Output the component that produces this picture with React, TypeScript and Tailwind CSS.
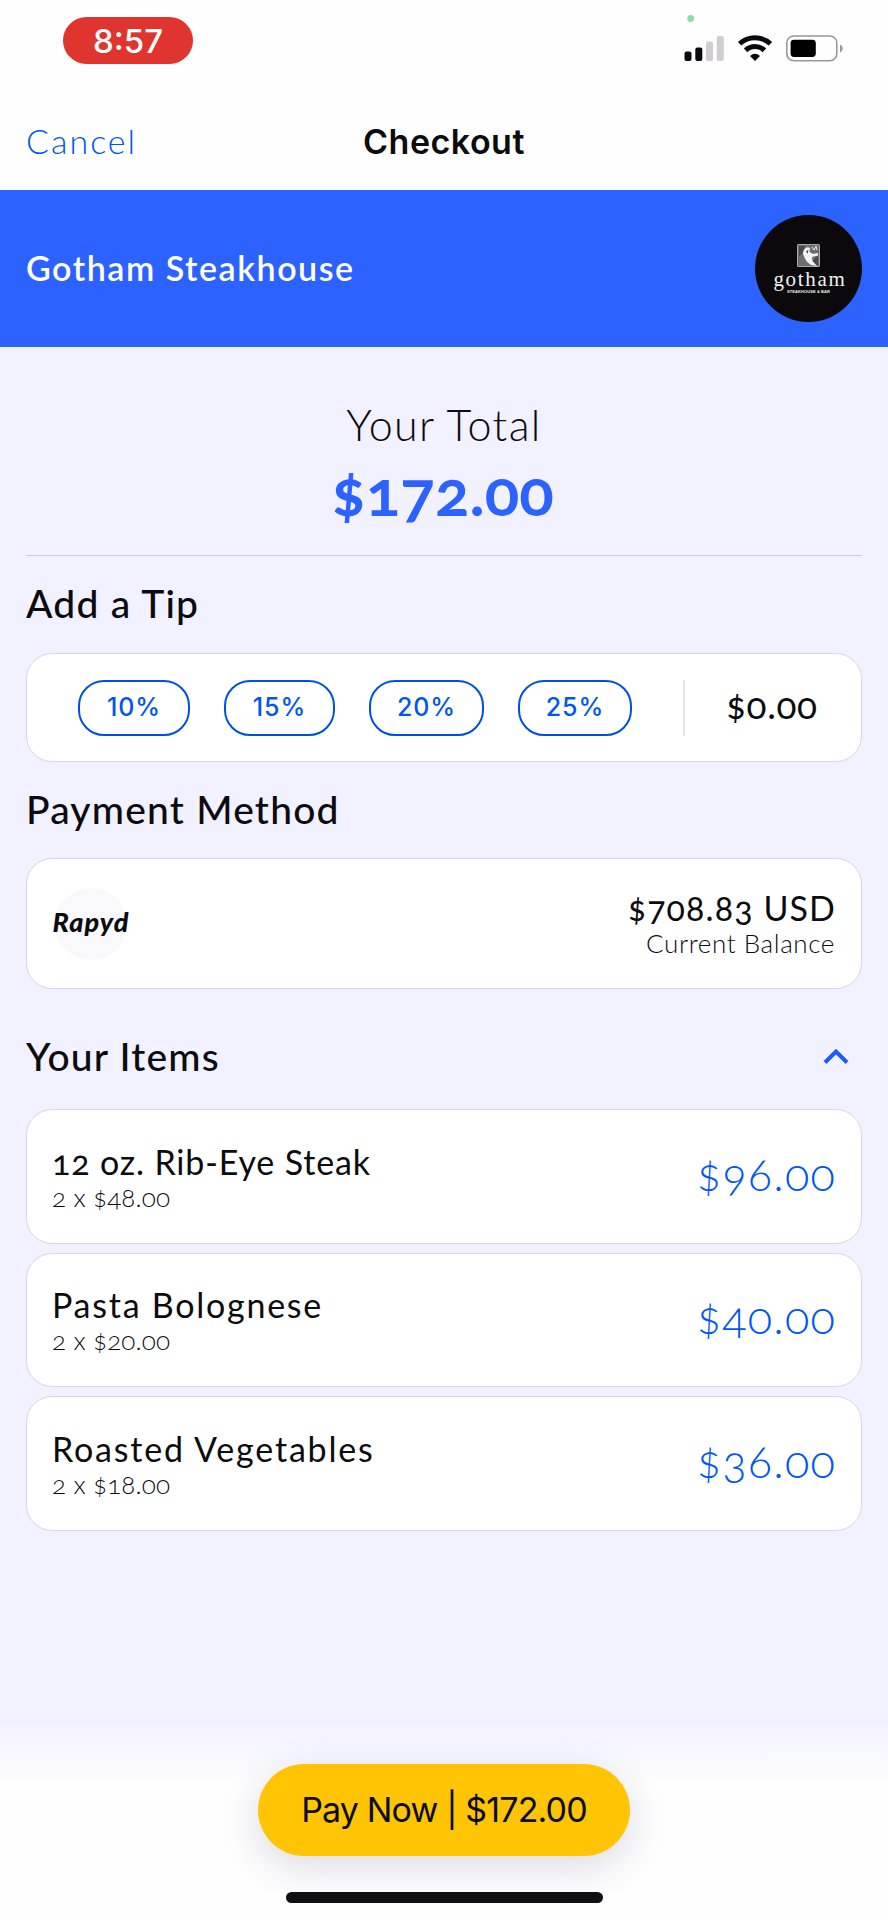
import React from 'react';

const tips = [
  { label: '10%', className: 'w-[112px]' },
  { label: '15%', className: 'w-[111px] ml-[34px]' },
  { label: '20%', className: 'w-[115px] ml-[34px]' },
  { label: '25%', className: 'w-[114px] ml-[34px]' },
];

const items = [
  { name: '12 oz. Rib-Eye Steak', detail: '2 x $48.00', price: '$96.00', nameClass: 'tracking-[0.85px]' },
  { name: 'Pasta Bolognese', detail: '2 x $20.00', price: '$40.00', nameClass: 'tracking-[1.75px]' },
  { name: 'Roasted Vegetables', detail: '2 x $18.00', price: '$36.00', nameClass: 'tracking-[1.8px]' },
];

function StatusBar() {
  return (
    <div className="flex h-[95px] items-start justify-between pl-[63px] pr-[45px]">
      <div className="mt-[17px] flex h-[47px] w-[130px] items-center justify-center rounded-[24px] bg-[#e0352f] pt-[2px] font-['Inter',sans-serif] text-[33px] font-medium leading-none text-white">
        8:57
      </div>
      <svg className="mt-[12px]" width="160" height="52" viewBox="0 0 160 52">
        <circle cx="7.7" cy="6.5" r="3.4" fill="#86e0a0" />
        <rect x="1.5" y="39.5" width="7" height="9.5" rx="2" fill="#0b0b0d" />
        <rect x="12.3" y="35.5" width="7" height="13.5" rx="2" fill="#0b0b0d" />
        <rect x="23" y="29.5" width="7" height="19.5" rx="2" fill="#cfcdd1" />
        <rect x="33.8" y="24" width="7" height="25" rx="2" fill="#cfcdd1" />
        <g fill="none" stroke="#0b0b0d" strokeWidth="5">
          <path d="M56.6 31.8 A22.5 22.5 0 0 1 87.4 31.8" />
          <path d="M62.6 38.4 A13.4 13.4 0 0 1 81.4 38.4" />
        </g>
        <path d="M67 44 Q72 39.4 77 44 L72 49 Z" fill="#0b0b0d" />
        <rect x="103.8" y="24" width="50" height="24.8" rx="7" fill="none" stroke="#99979c" strokeWidth="1.6" />
        <rect x="107.6" y="27.8" width="25.2" height="17.2" rx="3.4" fill="#000" />
        <path d="M157 32.6 Q159.8 34 159.8 36.4 Q159.8 38.8 157 40.4 Z" fill="#99979c" />
      </svg>
    </div>
  );
}

function GothamLogo() {
  return (
    <div className="flex size-[107px] flex-col items-center rounded-full bg-[#0b090b] pt-[29px] text-[#f1f1f1]">
      <svg width="23" height="23" viewBox="0 0 23 23">
        <rect width="23" height="23" rx="1.5" fill="#6d6d70" />
        <rect x="0.5" y="0.5" width="22" height="22" rx="1" fill="none" stroke="#a9a9ab" />
        <path d="M2 2h6L6 8l-4 5zM18 14l3-2v9h-8z" fill="#4a4a4d" />
        <path d="M7 6 Q9 2 13 4 L12.5 8 L16 10 L21 9 L21 11.5 L15 13 L15.5 17 L20 22 L14 21 Q8 17 7 12 Q5 9 7 6 Z" fill="#f3f3f3" />
        <path d="M9 7 L11.5 6 L10.5 10 Z" fill="#4b4b4e" />
        <path d="M15 3l2 3 2-4 1 4" fill="none" stroke="#eee" />
      </svg>
      <div className="-mt-px mr-[-3px] font-['Liberation_Serif',serif] text-[21px] leading-[26px] tracking-[1.7px]">
        gotham
      </div>
      <div className="-mt-[3px] font-['Liberation_Sans',sans-serif] text-[4px] font-bold leading-[5px] tracking-[0.1px]">
        STEAKHOUSE &amp; BAR
      </div>
    </div>
  );
}

function Heading({ children }: { children: React.ReactNode }) {
  return <h2 className="text-[39px] font-medium leading-[50px] tracking-[1.2px]">{children}</h2>;
}

export default function App() {
  return (
    <div className="flex h-[1920px] w-[888px] flex-col overflow-hidden bg-[#f2f1ff] font-['Lato',sans-serif] oldstyle-nums text-[#0c0c0f]">
      <header className="h-[189.5px] bg-[#fefefe]">
        <StatusBar />
        <div className="grid h-[94px] grid-cols-3 items-center px-[26px]">
          <button className="pb-[2px] text-left text-[34px] font-light leading-none tracking-[2px] text-[#0055f5]">Cancel</button>
          <h1 className="text-center font-['Inter',sans-serif] text-[34px] font-semibold leading-none tracking-[0.5px]">Checkout</h1>
        </div>
      </header>

      <section className="flex h-[157.5px] items-center justify-between bg-[#2c62ff] px-[26px]">
        <div className="pb-[2px] text-[34px] font-semibold tracking-[1.55px] text-white">Gotham Steakhouse</div>
        <GothamLogo />
      </section>

      <main className="px-[26px]">
        <div className="border-b border-[#cfcddb] pb-[26px] pt-[48px] text-center">
          <div className="text-[43px] font-light leading-[60px] tracking-[1.4px]">Your Total</div>
          <div className="mr-[3px] text-[64px] font-bold leading-[74px] text-[#2c62ff]">$172.00</div>
        </div>

        <div className="mt-[22px]">
          <Heading>Add a Tip</Heading>
        </div>
        <div className="mt-[25px] flex h-[109px] items-center rounded-[26px] border border-[#d8d6e2] bg-white pl-[51px]">
          {tips.map((tip) => (
            <button
              key={tip.label}
              className={`h-[56px] rounded-[26px] border-2 border-[#0050e8] font-['Inter',sans-serif] text-[25px] font-medium tracking-[0.9px] text-[#0055f5] ${tip.className}`}
            >
              {tip.label}
            </button>
          ))}
          <div className="ml-[51px] h-[56px] w-[2px] bg-[#e6e5ea]" />
          <div className="ml-[41px] pb-[5px] text-[37px] tracking-[0.6px]">$0.00</div>
        </div>

        <div className="mt-[22px]">
          <Heading>Payment Method</Heading>
        </div>
        <div className="mt-[24px] flex h-[131px] items-center justify-between rounded-[26px] border border-[#d8d6e2] bg-white px-[26px]">
          <div className="ml-[2px] flex size-[72px] items-center justify-center rounded-full bg-[#f9f9fc]">
            <span className="pb-[5px] text-[27px] font-black italic leading-none tracking-[1px]">Rapyd</span>
          </div>
          <div className="text-right">
            <div className="mr-[-1px] text-[34px] leading-[40px] tracking-[1.1px]">$708.83 USD</div>
            <div className="text-[26px] font-light leading-[31px] tracking-[0.6px]">Current Balance</div>
          </div>
        </div>

        <div className="mt-[42px] flex items-center justify-between">
          <Heading>Your Items</Heading>
          <svg className="mr-[13px]" width="26" height="18" viewBox="0 0 26 18">
            <path d="M2 15.5 L13 4.5 L24 15.5" fill="none" stroke="#1b5cff" strokeWidth="4" />
          </svg>
        </div>

        <div className="mt-[28px] flex flex-col gap-[9px]">
          {items.map((item) => (
            <div
              key={item.name}
              className="flex h-[134.5px] items-center justify-between rounded-[26px] border border-[#d8d6e2] bg-white px-[25px]"
            >
              <div>
                <div className={`pt-[1px] text-[34px] leading-[40px] ${item.nameClass}`}>{item.name}</div>
                <div className="text-[26px] font-light leading-[30px] tracking-[0.15px]">{item.detail}</div>
              </div>
              <div className="pb-1 text-[45px] font-light tracking-[1.2px] text-[#0055f5]">{item.price}</div>
            </div>
          ))}
        </div>
      </main>

      <footer className="mt-auto flex h-[196px] flex-col items-center bg-linear-to-b from-[#f2f1ff] to-[#fefefe] to-[60px] pt-[39.5px]">
        <button className="h-[92px] w-[372px] rounded-full bg-[#ffc505] font-['Inter',sans-serif] text-[34px] lining-nums tracking-[-0.85px] shadow-[0_10px_40px_rgba(40,30,80,0.16)]">
          Pay Now | $172.00
        </button>
        <div className="mt-[36.5px] h-[11px] w-[317px] rounded-full bg-[#101012]" />
      </footer>
    </div>
  );
}
